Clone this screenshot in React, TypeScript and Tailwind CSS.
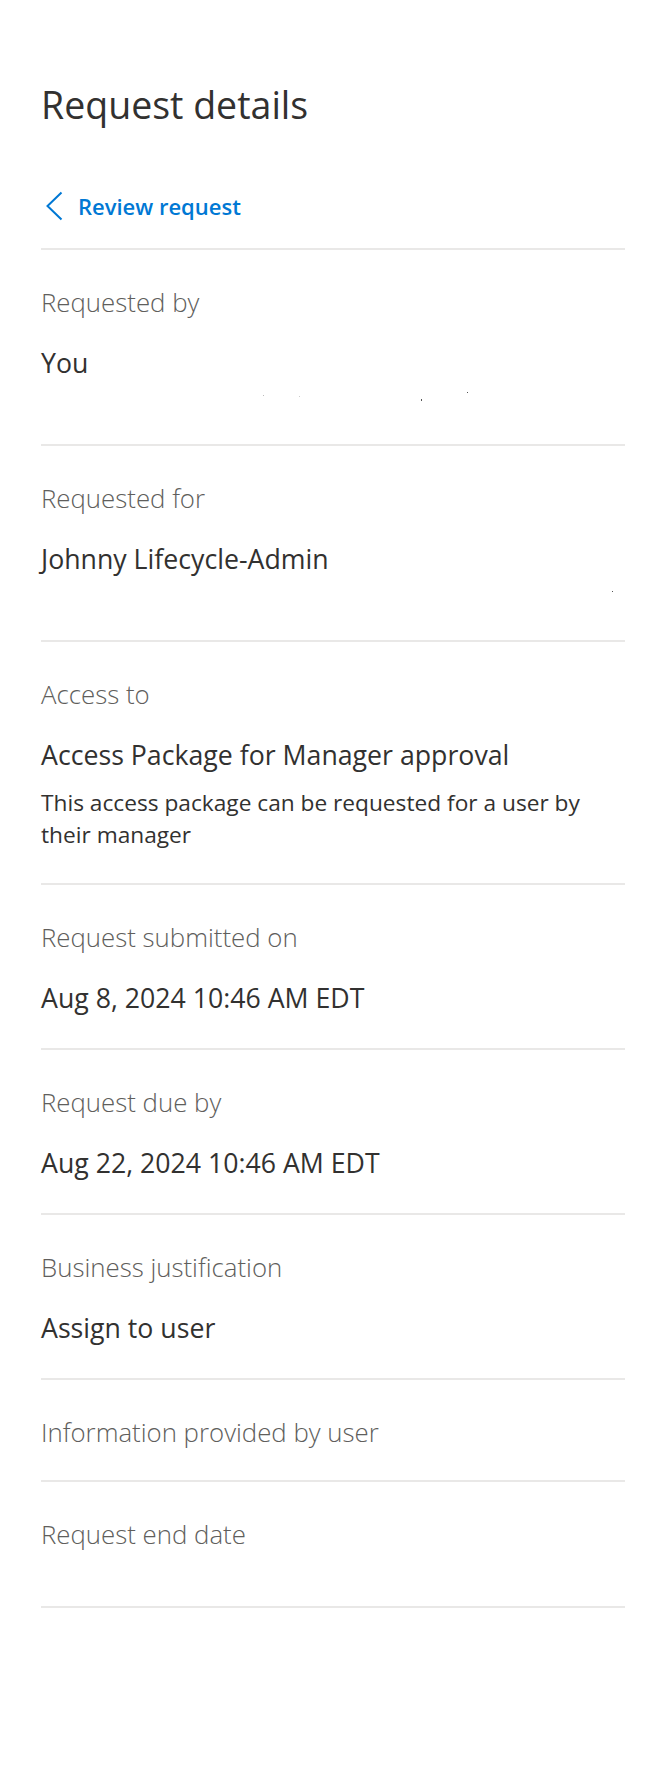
import React from "react";

const Divider = () => <div className="h-[2px] bg-[#e9e8e7]" />;

function Section({
  label,
  children,
}: {
  label: string;
  children?: React.ReactNode;
}) {
  return (
    <div>
      <div className={children ? "pt-[35px] pb-[32px]" : "pt-[35px] pb-[31px]"}>
        <div className="text-[25.8px] leading-[34px] font-light text-[#605e5c]">{label}</div>
        {children}
      </div>
      <Divider />
    </div>
  );
}

const Value = ({ children }: { children: React.ReactNode }) => (
  <div className="mt-[26px] text-[26.7px] leading-[36px] text-[#323130]">{children}</div>
);

export default function App() {
  return (
    <div className="min-h-[1790px] bg-white pl-[41px] pr-[43px] font-['Open_Sans',sans-serif]">
      <h1 className="pt-[81px] text-[37.5px] leading-[48px] font-normal text-[#323130]">
        Request details
      </h1>
      <div className="mt-[56px] pb-[22px] flex items-center h-[41px] box-content">
        <svg width="20" height="30" viewBox="0 0 20 30" className="ml-[4px] mr-[13px]">
          <path d="M16.5 1.5 L2.5 15 L16.5 28.5" fill="none" stroke="#0078d4" strokeWidth="2" strokeLinejoin="miter" />
        </svg>
        <span className="text-[22px] leading-[30px] font-semibold text-[#0078d4]">Review request</span>
      </div>
      <Divider />

      <Section label="Requested by">
        <Value>You</Value>
        <div className="h-[31px] relative">
          <span className="absolute left-[222px] top-[14px] w-[1px] h-[1px] bg-[#bbb]" />
          <span className="absolute left-[258px] top-[15px] w-[1px] h-[1px] bg-[#ccc]" />
          <span className="absolute left-[380px] top-[18px] w-[1px] h-[2px] bg-[#555]" />
          <span className="absolute left-[426px] top-[11px] w-[1px] h-[1px] bg-[#555]" />
        </div>
      </Section>

      <Section label="Requested for">
        <Value>Johnny Lifecycle-Admin</Value>
        <div className="h-[31px] relative">
          <span className="absolute left-[571px] top-[14px] w-[1px] h-[1px] bg-[#555]" />
        </div>
      </Section>

      <Section label="Access to">
        <Value>Access Package for Manager approval</Value>
        <div className="mt-[14px] text-[22.7px] leading-[32px] text-[#323130]">
          This access package can be requested for a user by their manager
        </div>
      </Section>

      <Section label="Request submitted on">
        <Value>Aug 8, 2024 10:46 AM EDT</Value>
      </Section>

      <Section label="Request due by">
        <Value>Aug 22, 2024 10:46 AM EDT</Value>
      </Section>

      <Section label="Business justification">
        <Value>Assign to user</Value>
      </Section>

      <Section label="Information provided by user" />

      <Section label="Request end date">
        <div className="h-[23px]" />
      </Section>
    </div>
  );
}
